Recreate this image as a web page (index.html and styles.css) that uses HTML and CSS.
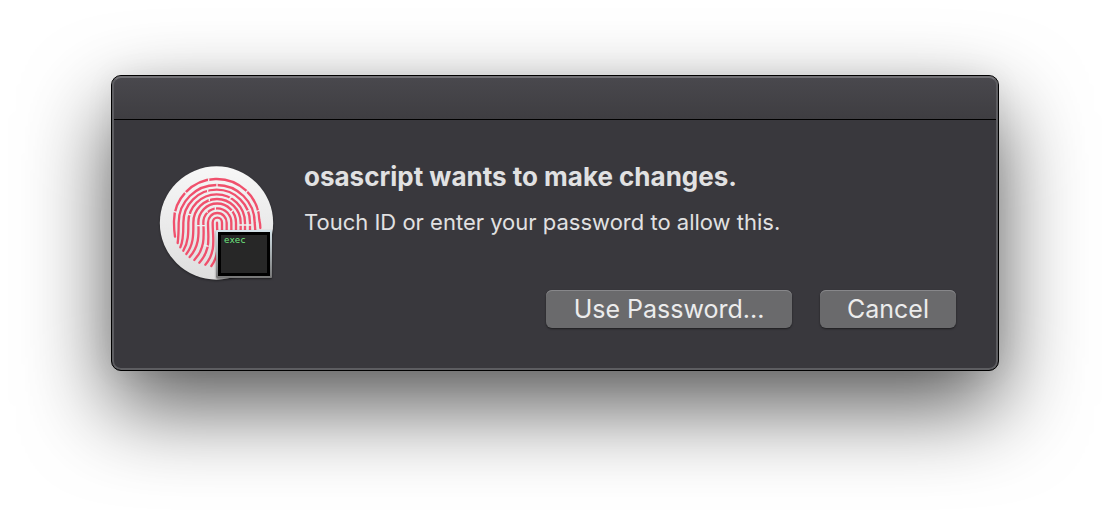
FILE: index.html
```html
<!DOCTYPE html>
<html lang="en">
<head>
<meta charset="utf-8">
<title>osascript</title>
<link rel="stylesheet" href="styles.css">
</head>
<body>
<main class="dialog" role="dialog" aria-labelledby="dialog-title" aria-describedby="dialog-text">
  <header class="titlebar"></header>
  <div class="content">
    <div class="badge-icon">
      <svg class="fingerprint" viewBox="30 33 339 345" aria-hidden="true">
        <defs>
          <linearGradient id="disc" x1="0" y1="0" x2="0" y2="1"><stop offset="0" stop-color="#f7f7f7"/><stop offset="1" stop-color="#dedede"/></linearGradient>
        </defs>
        <circle cx="199.500" cy="204" r="170" fill="url(#disc)"/>
        <g fill="none" stroke="#f0506c" stroke-width="7" stroke-linecap="round">
          <path d="M75 245Q72 225 72 203A128 127 0 0 1 328 195Q331 207 331 219"/>
          <path d="M83 264Q86 240 86 203A114 113 0 0 1 314 203L317 240"/>
          <path d="M91 277C101 256 100 225 100 203A100 99 0 0 1 300 203V240"/>
          <path d="M100 287C116 262 115 230 115 203A85 85 0 0 1 285 203V240"/>
          <path d="M109 297C132 268 130 235 130 203A71 71 0 0 1 272 203V240"/>
          <path d="M119 306C147 274 147 242 145 203A56 57 0 0 1 258 203V240"/>
          <path d="M133 315C165 281 162 246 160 203A42 43 0 0 1 244 203V240"/>
          <path d="M148 323C184 283 174 250 174 203A28 29 0 0 1 230 203V240"/>
          <path d="M166 329C200 290 188 250 188 203A14 15 0 0 1 216 203V240"/>
          <path d="M184 333C212 296 201 250 201 203"/>
        </g>
        <g stroke="#efefef" stroke-width="4">
          <path d="M176 70V83M201 84V97M173 99V111M178 127V139M196 155V165M102 108L110 116M285 116L293 106M70 169L83 173M316 171L330 165M237 132L249 122M286 171L298 166M238 175L249 166M112 177L124 180M166 165L173 173M140 212H165M162 270L176 274M265 210H305"/>
        </g>
      </svg>
      <div class="terminal"><span class="terminal-text">exec</span></div>
    </div>
    <div class="message">
      <h1 class="title" id="dialog-title">osascript wants to make changes.</h1>
      <p class="text" id="dialog-text">Touch ID or enter your password to allow this.</p>
      <div class="actions">
        <button class="button button-wide" type="button">Use Password...</button>
        <button class="button" type="button">Cancel</button>
      </div>
    </div>
  </div>
</main>
</body>
</html>
```
FILE: styles.css
```css
* { box-sizing: border-box; }
body {
  min-height: 100vh;
  margin: 0;
  padding: 75px 111px;
  background: #fff;
  font-family: Inter, "Liberation Sans", sans-serif;
}
.dialog {
  border: 1px solid #000;
  border-radius: 10px;
  background: #39383d;
  color: #e1e1e2;
  box-shadow: inset 0 0 0 2px #5d5d61, 0 36px 86px rgba(0, 0, 0, 0.65), 0 0 30px rgba(0, 0, 0, 0.06);
}
.titlebar {
  height: 44px;
  border: 2px solid #5d5d61;
  border-top-color: #727175;
  border-bottom: 0;
  border-radius: 9px 9px 0 0;
  background: linear-gradient(#49484d, #3e3d41);
  box-shadow: inset 0 -1px 0 #000;
}
.content {
  display: flex;
  gap: 31px;
  padding: 46px 42px 42px 48px;
}
.badge-icon {
  position: relative;
  flex: none;
  width: 113px;
  height: 115px;
}
.fingerprint {
  display: block;
  width: 100%;
  height: 100%;
  overflow: visible;
  filter: drop-shadow(0 1px 1px rgba(0, 0, 0, 0.4));
}
.terminal {
  position: absolute;
  right: 1px;
  bottom: 3px;
  width: 56px;
  height: 48px;
  padding: 2px;
  border-radius: 1px;
  background: linear-gradient(#d5e3ea, #777);
  box-shadow: 0 1px 2px rgba(0, 0, 0, 0.5);
}
.terminal-text {
  display: block;
  height: 100%;
  padding-left: 3px;
  border: 3px solid #000;
  background: #272727;
  color: #70e880;
  font: 9px/10px "DejaVu Sans Mono", monospace;
}
.message {
  flex: 1;
  min-width: 0;
}
.title {
  margin: -5px 0 0;
  font-size: 26px;
  line-height: 32px;
  font-weight: 700;
}
.text {
  margin: 14px 0 0;
  font-size: 22px;
  line-height: 30px;
}
.actions {
  display: flex;
  justify-content: flex-end;
  gap: 28px;
  margin-top: 53px;
}
.button {
  min-width: 136px;
  height: 38px;
  padding: 0;
  border: 0;
  border-radius: 6px;
  background: #6a6a6c;
  color: #ececec;
  font: 25px/38px Inter, "Liberation Sans", sans-serif;
  box-shadow: inset 0 1px 0 #87878a, 0 1px 2px rgba(0, 0, 0, 0.5);
}
.button-wide { min-width: 246px; }
```
